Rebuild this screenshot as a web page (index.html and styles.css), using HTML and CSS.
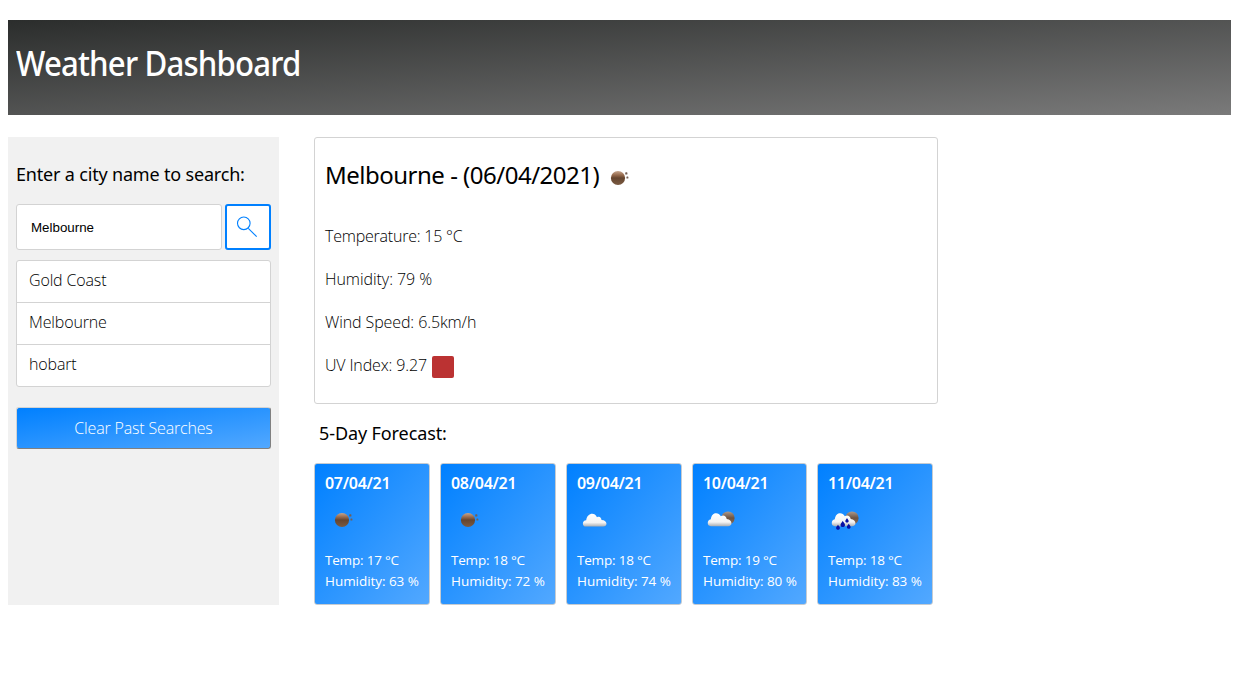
FILE: index.html
```
<!DOCTYPE html>
<html lang="en">
<head>
<meta charset="utf-8">
<title>Weather Dashboard</title>
<link rel="stylesheet" href="styles.css">
</head>
<body>
<svg class="defs" width="0" height="0" aria-hidden="true">
  <defs>
    <linearGradient id="sun" x1="0" y1="0" x2="0" y2="1"><stop offset="0" stop-color="#c7a68e"/><stop offset=".3" stop-color="#95694c"/><stop offset=".5" stop-color="#65452f"/><stop offset="1" stop-color="#7b5b42"/></linearGradient>
    <linearGradient id="dusk" x1="0" y1="0" x2="0" y2="1"><stop offset="0" stop-color="#ad9b8e"/><stop offset=".5" stop-color="#6d5442"/><stop offset="1" stop-color="#8a6c55"/></linearGradient>
    <linearGradient id="cloud" x1="0" y1="0" x2="0" y2="1"><stop offset="0" stop-color="#fff"/><stop offset=".68" stop-color="#f4f4f4"/><stop offset="1" stop-color="#a9adb2"/></linearGradient>
    <symbol id="clear" viewBox="0 0 20 16"><circle cx="8" cy="8" r="7.100" fill="url(#sun)"/><rect x="15.200" y="2.300" width="2.200" height="2.200" rx=".6" fill="#735f55"/><rect x="16.400" y="6.600" width="2" height="2" rx=".6" fill="#735f55"/></symbol>
    <symbol id="overcast" viewBox="0 0 26 16"><path d="M4 14.600C-.4 14.600 0 8.400 4.200 8.300C5 1 12.500-.5 15 5.200C17.500 3.800 19.300 5.500 19.500 8C25.500 8 26.200 14.600 21 14.600Z" fill="url(#cloud)"/></symbol>
    <symbol id="partly" viewBox="0 0 28 20"><circle cx="21" cy="8" r="6.600" fill="url(#dusk)"/><path d="M3.800 16.200C-.5 16 0 9.800 3.800 9.300C4.500 2 11.500 1.500 13.800 6.200C16.500 4.500 19.200 6 19.700 9C25.500 9.500 26 16.200 21 16.200Z" fill="url(#cloud)"/></symbol>
    <symbol id="drop" viewBox="0 0 5 6"><path d="M2.500 0C3 1.700 5 2.500 4.500 4.400C4 6.300 1 6.300.5 4.400C0 2.500 2 1.700 2.500 0Z" fill="#0710a6"/></symbol>
  </defs>
</svg>

<header class="banner"><h1 class="title">Weather Dashboard</h1></header>

<main class="layout">
  <aside class="sidebar">
    <h2 class="prompt">Enter a city name to search:</h2>
    <div class="search">
      <input class="search-input" type="text" value="Melbourne" aria-label="City">
      <button class="search-button" aria-label="Search">
        <svg class="search-icon" viewBox="0 0 22 22"><circle cx="7.800" cy="7.300" r="6.300"/><path d="M12.300 12.300L20.700 20.700"/></svg>
      </button>
    </div>
    <ul class="history">
      <li class="history-item">Gold Coast</li>
      <li class="history-item">Melbourne</li>
      <li class="history-item">hobart</li>
    </ul>
    <button class="clear">Clear Past Searches</button>
  </aside>

  <div class="content">
    <section class="current">
      <h2 class="city"><span class="city-name">Melbourne - (06/04/2021)</span><svg class="city-icon"><use href="#clear"/></svg></h2>
      <p class="stat temp">Temperature: 15 °C</p>
      <p class="stat hum">Humidity: 79 %</p>
      <p class="stat wind">Wind Speed: 6.5km/h</p>
      <p class="stat uv"><span>UV Index: 9.27</span><span class="uv-badge"></span></p>
    </section>
    <h2 class="forecast-title">5-Day Forecast:</h2>
    <section class="forecast">
      <article class="day"><h3 class="date">07/04/21</h3><div class="sky"><svg class="icon-clear"><use href="#clear"/></svg></div><p class="line t">Temp: 17 °C</p><p class="line">Humidity: 63 %</p></article>
      <article class="day"><h3 class="date">08/04/21</h3><div class="sky"><svg class="icon-clear"><use href="#clear"/></svg></div><p class="line t">Temp: 18 °C</p><p class="line">Humidity: 72 %</p></article>
      <article class="day"><h3 class="date">09/04/21</h3><div class="sky"><svg class="icon-overcast"><use href="#overcast"/></svg></div><p class="line t">Temp: 18 °C</p><p class="line">Humidity: 74 %</p></article>
      <article class="day narrow"><h3 class="date">10/04/21</h3><div class="sky"><svg class="icon-partly"><use href="#partly"/></svg></div><p class="line t">Temp: 19 °C</p><p class="line">Humidity: 80 %</p></article>
      <article class="day"><h3 class="date">11/04/21</h3><div class="sky"><svg class="icon-partly rain" viewBox="0 0 28 20"><use href="#partly" width="28" height="20"/><use href="#drop" x="4.500" y="14.500" width="5" height="5.500"/><use href="#drop" x="9" y="10.500" width="5.500" height="7"/><use href="#drop" x="14" y="8" width="4" height="5"/><use href="#drop" x="15.500" y="13.500" width="4.500" height="5.500"/></svg></div><p class="line t">Temp: 18 °C</p><p class="line">Humidity: 83 %</p></article>
    </section>
  </div>
</main>
</body>
</html>
```

FILE: styles.css
```
* { box-sizing: border-box; }
body { margin: 20px 9px 0 8px; background: #fff; color: #000; font-family: "Noto Sans", sans-serif; }
h1, h2, h3, p, ul { margin: 0; padding: 0; font-weight: 400; white-space: nowrap; }
.defs { position: absolute; }
button { font-family: inherit; padding: 0; }

.banner { height: 95px; padding: 19px 8px; background: linear-gradient(to bottom right, #2b2d2c, #7a7a7a); }
.title { font-size: 34px; line-height: 48px; font-weight: 500; letter-spacing: -0.9px; color: #fff; transform: scaleX(0.917); transform-origin: left; }

.layout { display: flex; margin-top: 22px; }
.sidebar { width: 271px; height: 468px; padding: 24px 8px 0; background: #f1f1f1; }
.prompt { font-size: 18px; line-height: 26px; letter-spacing: -0.18px; }
.search { display: flex; gap: 3px; margin-top: 17px; }
.search-input { width: 206px; height: 46px; padding: 0 14px; border: 1px solid #d3d3d3; border-radius: 3px; background: #fff; font: 13.333px "Liberation Sans", sans-serif; color: #000; }
.search-button { display: flex; width: 46px; height: 46px; padding: 10px 0 0 9px; border: 2px solid #0080ff; border-radius: 3px; background: #fff; }
.search-icon { width: 22px; height: 22px; fill: none; stroke: #0080ff; stroke-width: 1.1; }
.history { margin-top: 10px; border: 1px solid #d3d3d3; border-radius: 3px; background: #fff; list-style: none; }
.history-item { height: 42px; padding-left: 12px; border-bottom: 1px solid #d3d3d3; font: 300 16px/38px "Open Sans", sans-serif; letter-spacing: -0.15px; }
.history-item:last-child { height: 41px; border-bottom: 0; }
.clear { display: block; width: 255px; height: 42px; margin-top: 20px; border: 1px solid; border-color: #d3d3d3 #808080 #808080 #d3d3d3; border-radius: 3px; background: linear-gradient(to bottom right, #0080ff, #52a8ff); color: #fff; font: 300 16px/40px "Open Sans", sans-serif; letter-spacing: -0.17px; }

.content { width: 624px; margin-left: 35px; }
.current { height: 267px; padding: 19px 10px 0; border: 1px solid #d3d3d3; border-radius: 3px; }
.city { display: flex; height: 36px; font-size: 24px; line-height: 36px; letter-spacing: -0.5px; }
.city-name { width: 285px; }
.city-icon { width: 20px; height: 16px; margin-top: 13px; }
.stat { height: 43px; font: 300 16px/43px "Open Sans", sans-serif; }
.temp { margin-top: 22px; letter-spacing: -0.22px; }
.hum { letter-spacing: -0.05px; }
.wind { letter-spacing: -0.1px; }
.uv { display: flex; gap: 5px; letter-spacing: -0.14px; }
.uv-badge { width: 22px; height: 22px; margin-top: 12px; border-radius: 2px; background: #bb3232; }
.forecast-title { padding: 15px 0 1px 5px; font-size: 18px; line-height: 28px; letter-spacing: -0.1px; }
.forecast { display: flex; gap: 10px; margin-top: 15px; }
.day { width: 116px; height: 142px; padding: 8px 10px; border: 1px solid #c5cbd1; border-radius: 3px; background: linear-gradient(to bottom right, #0080ff, #52a8ff); color: #fff; }
.narrow { width: 115px; }
.date { font-size: 16px; line-height: 22px; font-weight: 600; letter-spacing: -0.3px; }
.sky { height: 56px; padding-top: 18px; }
.sky svg { display: block; }
.icon-clear { width: 20px; height: 16px; margin-left: 9px; }
.icon-overcast { width: 26px; height: 16px; margin-left: 5px; }
.icon-partly { width: 28px; height: 20px; margin: -2px 0 0 4px; }
.rain { margin-left: 3px; }
.line { font: 400 13.5px/21px "Open Sans", sans-serif; letter-spacing: -0.05px; }
.t { letter-spacing: -0.2px; }
```
